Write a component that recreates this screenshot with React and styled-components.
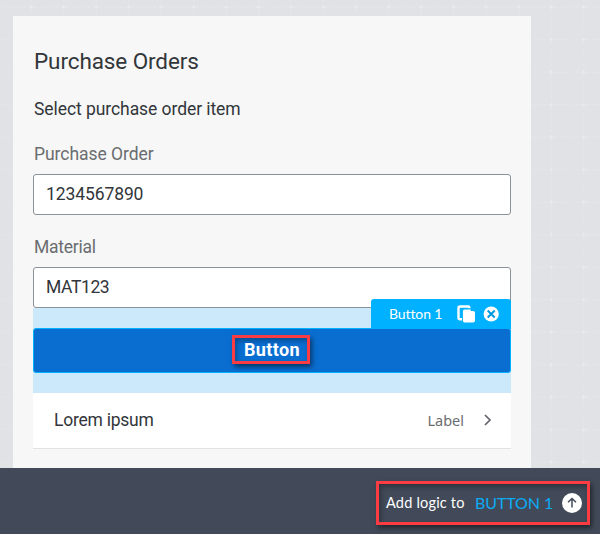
import React from "react";
import styled, { createGlobalStyle } from "styled-components";

const GlobalStyle = createGlobalStyle`
  * { box-sizing: border-box; }
  body { margin: 0; overflow: hidden; font-family: Roboto, "Noto Sans", sans-serif; }
`;

const Screen = styled.main`
  display: flex;
  flex-direction: column;
  width: 600px;
  height: 534px;
  background: #e1e2e6;
`;

const Workspace = styled.div`
  display: grid;
  height: 468px;
  overflow: hidden;
`;

const GridBackdrop = styled.svg`
  grid-area: 1 / 1;
  width: 600px;
  height: 468px;
`;

const Page = styled.section`
  grid-area: 1 / 1;
  z-index: 1;
  width: 518px;
  height: 452px;
  margin: 16px 0 0 13px;
  padding: 0 20px;
  background: #f7f7f7;
`;

const Line = styled.span`
  display: block;
  width: max-content;
  white-space: pre;
  font-weight: ${(p) => p.$weight || 400};
  font-size: ${(p) => p.$size}px;
  letter-spacing: ${(p) => p.$track || 0}px;
  line-height: 24px;
  color: ${(p) => p.$color || "#32363a"};
`;

const Title = styled.h1`
  margin: 0;
  padding: 33px 0 0 1px;
  height: 81px;
`;

const Caption = styled.p`
  margin: 0;
  padding: 0 0 0 1px;
  height: 45px;
`;

const FieldLabel = styled.label`
  display: block;
  height: 32px;
  padding-left: 1px;
`;

const Field = styled.div`
  display: flex;
  align-items: center;
  height: 41px;
  padding: 0 12px 2px;
  margin-bottom: ${(p) => p.$gap || 0}px;
  border: 1px solid #89919a;
  border-radius: 3px;
  background: #fff;
`;

const Selection = styled.div`
  position: relative;
  height: 85px;
  padding: 20px 0;
  background: #cce9fb;
`;

const PrimaryButton = styled.div`
  display: flex;
  justify-content: center;
  height: 45px;
  padding-top: 6px;
  border: 1px solid #00b1ff;
  border-radius: 3px;
  background: #0a6ed1;
`;

const Highlight = styled.div`
  display: flex;
  align-items: center;
  border: 3px solid #fb3d43;
  box-shadow: 2px 3px 5px rgba(0, 0, 0, 0.5), inset 2px 3px 5px rgba(0, 0, 0, 0.3);
`;

const ButtonHighlight = styled(Highlight)`
  width: 78px;
  height: 29px;
  padding-left: 9px;
  margin-left: -2px;
`;

const SelectionTag = styled.div`
  position: absolute;
  right: 0;
  top: -9px;
  display: flex;
  align-items: center;
  width: 140px;
  height: 30px;
  padding-left: 18px;
  border-radius: 3px 3px 0 0;
  background: #00b1ff;
`;

const TagLabel = styled.div`
  width: 68px;
`;

const TagIcons = styled.svg`
  width: 43px;
  height: 18px;
`;

const ListItem = styled.div`
  display: flex;
  align-items: center;
  justify-content: space-between;
  height: 56px;
  padding: 0 18px 1px 21px;
  border-bottom: 1px solid #e3e3e5;
  background: #fff;
`;

const ItemMeta = styled.div`
  display: flex;
  align-items: center;
  gap: 19px;
`;

const Chevron = styled.svg`
  width: 10px;
  height: 12px;
`;

const Footer = styled.footer`
  display: flex;
  justify-content: flex-end;
  height: 66px;
  padding: 13px 10px 0 0;
  background: #424a59;
`;

const LogicHighlight = styled(Highlight)`
  width: 214px;
  height: 44px;
  padding: 0 5px 0 7px;
`;

const Prompt = styled.div`
  width: 79px;
`;

const Target = styled.div`
  width: 78px;
  margin-left: 10px;
`;

const ArrowIcon = styled.svg`
  flex: none;
  width: 20px;
  height: 20px;
  margin-left: auto;
`;

const MetaText = styled(Line)`
  font-family: "Noto Sans", sans-serif;
`;

const UiText = styled(Line)`
  font-family: Lato, sans-serif;
`;

const columns = Array.from({ length: 18 }, (_, i) => 31.3 + i * 32.5);
const rows = Array.from({ length: 15 }, (_, i) => 7.2 + i * 32.5);

function CanvasGrid() {
  return (
    <GridBackdrop aria-hidden="true" stroke="#e6e7ea">
      {columns.map((x) => (
        <path key={x} d={`M${x} -28V468`} strokeDasharray="3 2.4167" />
      ))}
      {rows.map((y) => (
        <path key={y} d={`M-4 ${y}H600`} strokeDasharray="3 2.4167" />
      ))}
      {columns.flatMap((x) =>
        rows.map((y) => (
          <path key={`${x}-${y}`} d={`M${x - 2} ${y}h4M${x} ${y - 2}v4`} stroke="#eaebed" />
        ))
      )}
    </GridBackdrop>
  );
}

export default function App() {
  return (
    <>
      <GlobalStyle />
      <Screen>
        <Workspace>
          <CanvasGrid />
          <Page>
            <Title><Line $size={22.5} $track={-0.1}>Purchase Orders</Line></Title>
            <Caption><Line $size={17.5} $track={-0.07}>Select purchase order item</Line></Caption>
            <FieldLabel><Line $size={17.5} $track={-0.05} $color="#6a6d70">Purchase Order</Line></FieldLabel>
            <Field $gap={20}><Line $size={17.5} $track={-0.1}>1234567890</Line></Field>
            <FieldLabel><Line $size={17.5} $track={-0.25} $color="#6a6d70">Material</Line></FieldLabel>
            <Field><Line $size={17.5} $track={-0.4}>MAT123</Line></Field>
            <Selection>
              <PrimaryButton>
                <ButtonHighlight>
                  <Line $size={18} $weight={700} $track={0.35} $color="#fff">Button</Line>
                </ButtonHighlight>
              </PrimaryButton>
              <SelectionTag>
                <TagLabel><UiText $size={14} $track={-0.1} $color="#fff">Button 1</UiText></TagLabel>
                <TagIcons viewBox="0 0 43 18" aria-hidden="true">
                  <path d="M12.3 3.2V2.4Q12.3 1.5 11.3 1.5H3Q1.5 1.5 1.5 3v9.7Q1.5 14.2 3 14.2h2" fill="none" stroke="#fff" strokeWidth="2.4" />
                  <path d="M7.7 4.5h6V6h2.5Q18 6 18 7.8v8q0 1.8-1.8 1.8H7.7q-1.8 0-1.8-1.8V6.3q0-1.8 1.8-1.8Z" fill="#fff" />
                  <circle cx="34.2" cy="9" r="7.6" fill="#fff" />
                  <path d="m30.7 5.5 7 7m0-7-7 7" stroke="#0098e0" strokeWidth="2" />
                </TagIcons>
              </SelectionTag>
            </Selection>
            <ListItem>
              <Line $size={17.5} $track={-0.25}>Lorem ipsum</Line>
              <ItemMeta>
                <MetaText $size={14.5} $color="#6a6d70">Label</MetaText>
                <Chevron viewBox="0 0 10 12" aria-hidden="true">
                  <path d="m2 1 5 5-5 5" fill="none" stroke="#62666a" strokeWidth="1.7" />
                </Chevron>
              </ItemMeta>
            </ListItem>
          </Page>
        </Workspace>
        <Footer>
          <LogicHighlight>
            <Prompt><UiText $size={14.5} $track={0.2} $color="#fff">Add logic to</UiText></Prompt>
            <Target><UiText $size={16} $track={-0.1} $color="#0cacf5">BUTTON 1</UiText></Target>
            <ArrowIcon viewBox="0 0 20 20" aria-hidden="true">
              <circle cx="10" cy="10" r="10" fill="#fff" />
              <path d="M10 14.5V5.8M6 9.3l4-3.8 4 3.8" fill="none" stroke="#424a59" strokeWidth="1.5" />
            </ArrowIcon>
          </LogicHighlight>
        </Footer>
      </Screen>
    </>
  );
}
